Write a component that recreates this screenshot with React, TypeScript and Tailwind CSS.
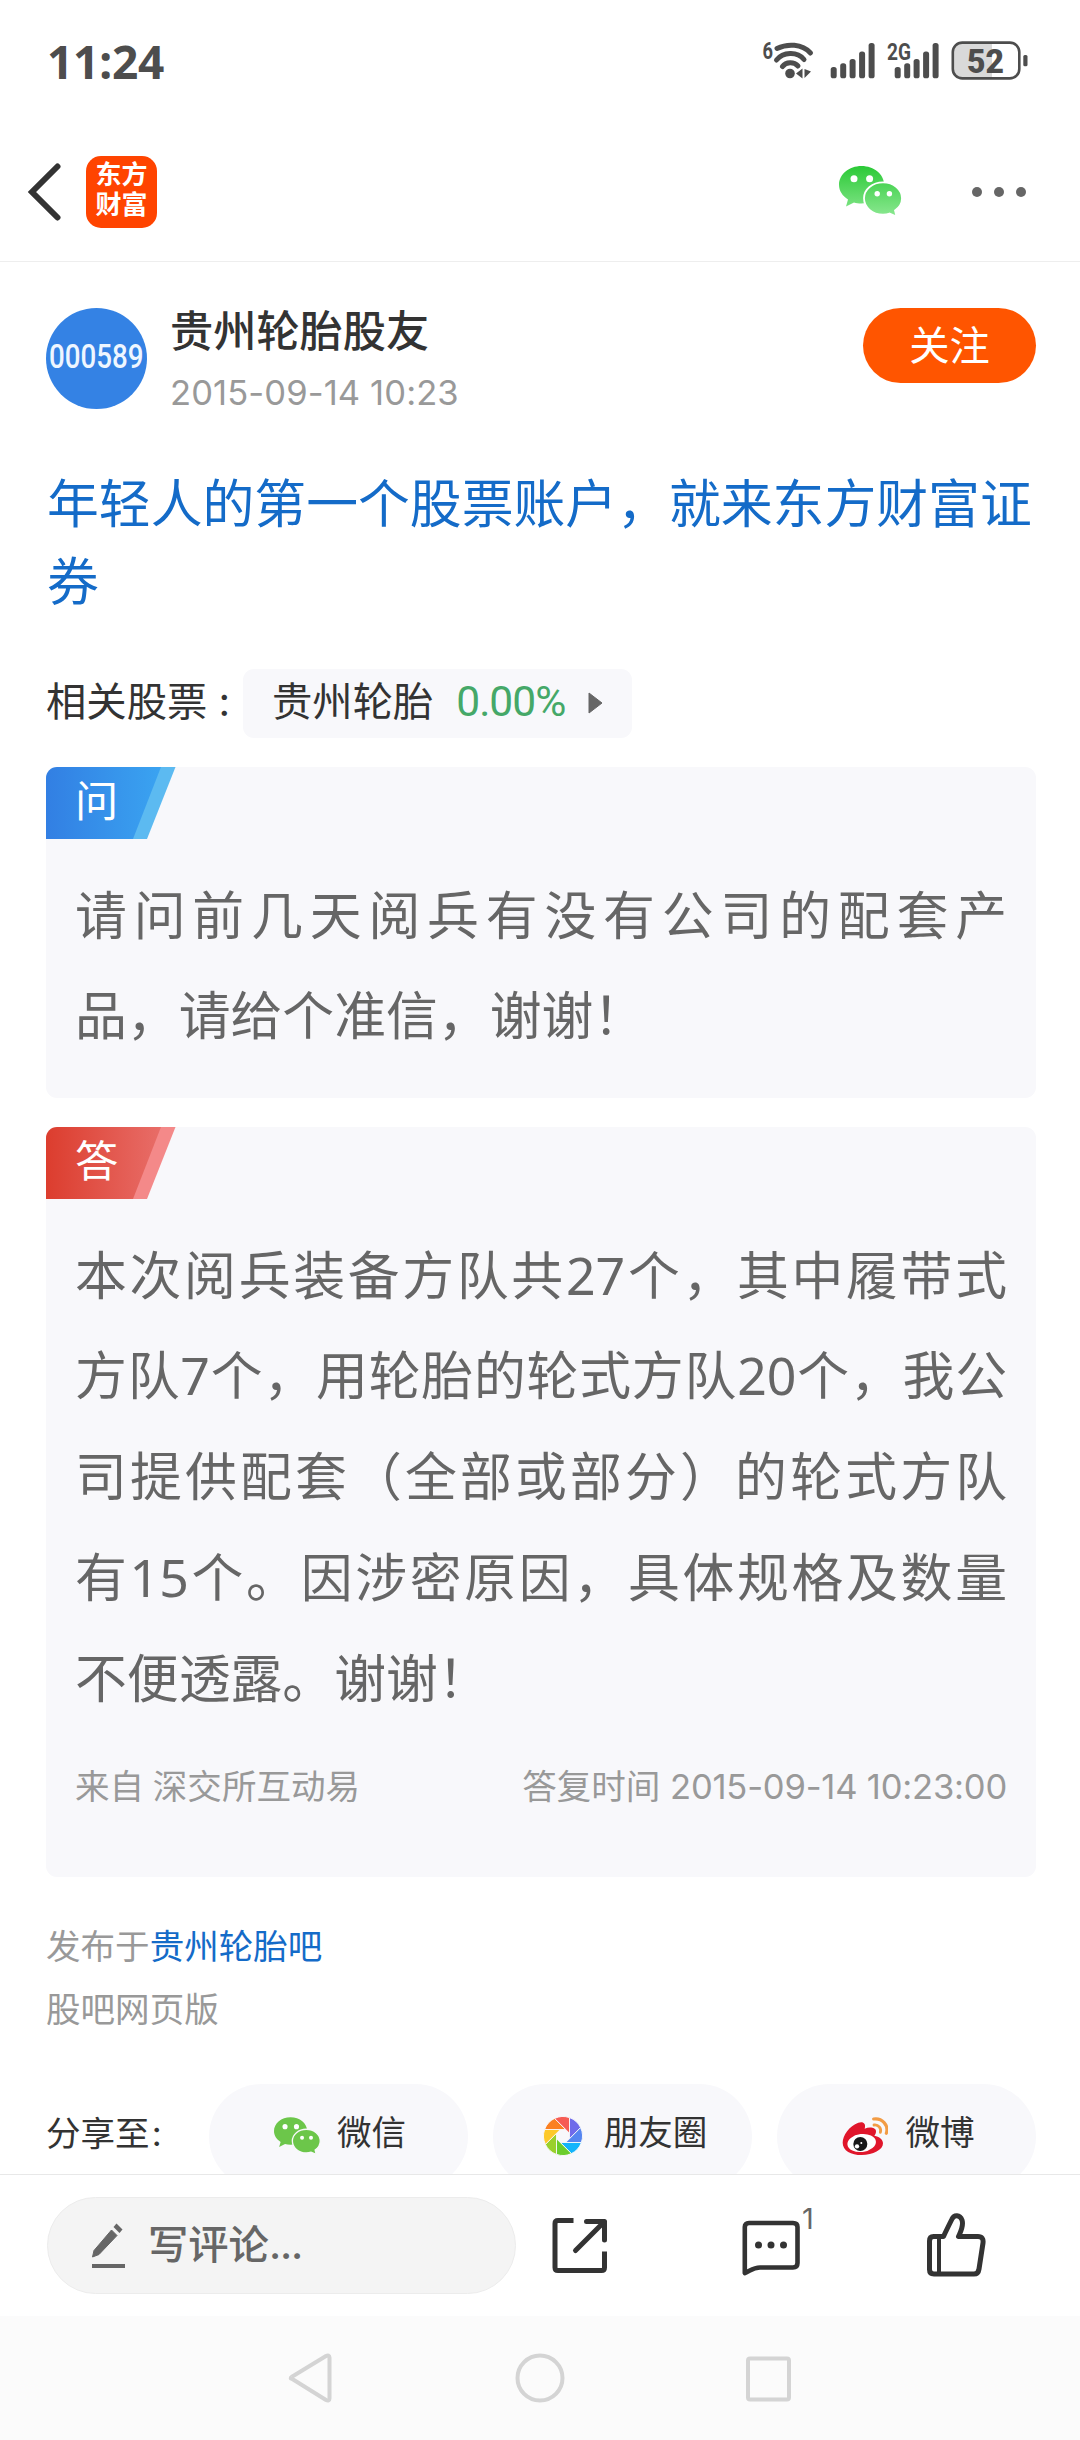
import type { ReactNode } from "react"

const latin = "font-['Inter','Noto_Sans_CJK_SC',sans-serif]"

const blades = ["#6f6aea", "#5585f0", "#14b4fb", "#6bcd2c", "#9ad02c", "#fdc92a", "#fb8022", "#f65c54"]

function StatusIcons() {
  return (
    <svg width="270" height="60" viewBox="760 32 270 60" fill="#4d4d4d" className="font-['Roboto',sans-serif]">
      <text x="762.5" y="59" fontSize="23" fontWeight="700" textLength="10.5" lengthAdjust="spacingAndGlyphs">6</text>
      {/* wifi */}
      <g fill="none" stroke="#4d4d4d" strokeWidth="5" strokeLinecap="round">
        <path d="M777 48.5C787 43.5 802 43.5 810.5 53" />
        <path d="M776.5 60C783 52 797 51 804 59.5" />
        <path d="M782.5 66.5C786 61.5 794 61.5 798 66" />
      </g>
      <circle cx="790" cy="73.5" r="4.8" />
      <path d="M796 73.5L802.5 68.5V78.5ZM804.5 69L811 71.5L804.5 78Z" />
      {/* signal bars */}
      {[0, 64].map((dx) => (
        <g key={dx}>
          <rect x={830.7 + dx} y="67" width="6" height="11.3" rx="2.6" />
          <rect x={840.2 + dx} y="63.3" width="6" height="15" rx="2.6" />
          <rect x={849.6 + dx} y="59" width="6" height="19.3" rx="2.6" />
          <rect x={859.1 + dx} y="51.5" width="6" height="26.8" rx="2.6" />
          <rect x={868.6 + dx} y="43" width="6" height="35.3" rx="2.6" />
        </g>
      ))}
      <text x="887" y="60.3" fontSize="23.5" fontWeight="700" textLength="24" lengthAdjust="spacingAndGlyphs">2G</text>
      {/* battery */}
      <path d="M963 43H992V78H963C956 78 953 74 953 68V53C953 47 956 43 963 43Z" fill="#d9d9d9" />
      <rect x="952.8" y="42.6" width="66.5" height="35.8" rx="9.5" fill="none" stroke="#4d4d4d" strokeWidth="2.6" />
      <rect x="1023.3" y="55" width="4.2" height="11.3" rx="1.5" />
      <text x="967" y="73" fontSize="32.5" fontWeight="900" textLength="37" lengthAdjust="spacingAndGlyphs">52</text>
    </svg>
  )
}

function WechatIcon({ id, width, height, from, to, gap }: { id: string; width: number; height: number; from: string; to: string; gap: string }) {
  return (
    <svg width={width} height={height} viewBox="0 0 64 51">
      <defs>
        <linearGradient id={id} x1="0" y1="0" x2="0" y2="51" gradientUnits="userSpaceOnUse">
          <stop offset="0" stopColor={from} />
          <stop offset="1" stopColor={to} />
        </linearGradient>
      </defs>
      <path d="M22.5 0C35 0 45.2 8.4 45.2 18.8S35 37.5 22.5 37.5C19.5 37.5 17 37.2 15 36.5L7 40.5L9 33.5C3.5 30 0 25 0 18.8C0 8.4 10 0 22.5 0Z" fill={`url(#${id})`} />
      <path d="M44 16.3C54.6 16.3 63 23.5 63 32.3C63 37.3 60.5 41.5 56 44.5L57.5 50.5L50.5 47.5C48.5 48.3 46.5 48.6 44 48.6C33.4 48.6 25 41.3 25 32.3C25 23.5 33.4 16.3 44 16.3Z" fill={`url(#${id})`} stroke={gap} strokeWidth="1.8" />
      <g fill="#fff">
        <circle cx="15" cy="12.8" r="3.5" />
        <circle cx="30.6" cy="12.8" r="3.5" />
        <circle cx="38.2" cy="27.8" r="2.7" />
        <circle cx="50.4" cy="27.8" r="2.7" />
      </g>
    </svg>
  )
}

function MomentsIcon() {
  return (
    <svg width="40" height="40" viewBox="-20 -20 40 40">
      {blades.map((color, i) => (
        <path
          key={color}
          d="M6.5 -18.4A19.5 19.5 0 0 1 17.6 -8.4L6.5 2.7Z"
          transform={`rotate(${i * 45})`}
          fill={color}
          stroke="#f8f8fb"
          strokeWidth="0.9"
        />
      ))}
    </svg>
  )
}

function WeiboIcon() {
  return (
    <svg width="47" height="40" viewBox="0 0 141 120">
      <path d="M5 80C5 58 25 30 52 20C66 15 76 22 71 38C85 32 105 34 105 46C105 52 103 56 100 59C115 62 126 70 126 82C126 102 96 117 62 117C30 117 5 104 5 80Z" fill="#e0162b" />
      <ellipse cx="62" cy="81" rx="43" ry="27" transform="rotate(-7 62 81)" fill="#fff" />
      <circle cx="58" cy="84" r="21" fill="#181818" />
      <circle cx="48" cy="91" r="6.5" fill="#fff" />
      <circle cx="61" cy="81" r="3" fill="#fff" />
      <g fill="none" stroke="#f29c45" strokeLinecap="round">
        <path d="M98 9C123 5 144 28 136 52" strokeWidth="9.5" />
        <path d="M99 27C112 25 122 37 118 49" strokeWidth="8.5" />
      </g>
    </svg>
  )
}

function Tag({ id, label, from, to, edge }: { id: string; label: string; from: string; to: string; edge: string }) {
  return (
    <div className="relative h-[72px] w-[130px]">
      <svg width="130" height="72" className="absolute inset-0">
        <defs>
          <linearGradient id={id}>
            <stop offset="0" stopColor={from} />
            <stop offset="1" stopColor={to} />
          </linearGradient>
        </defs>
        <path d="M100 0H129.5L101 72H80Z" fill={edge} />
        <path d="M0 0H115L87 72H0Z" fill={`url(#${id})`} />
      </svg>
      <span className="relative block w-[101px] text-center text-[43.2px] leading-[68px] text-white">{label}</span>
    </div>
  )
}

function CardText({ children }: { children: ReactNode }) {
  return (
    <p className="mt-[26px] ml-[29px] mr-[29px] text-justify font-['Noto_Sans','Noto_Sans_CJK_SC',sans-serif] text-[51.84px] leading-[100.9px] text-[#666]">
      {children}
    </p>
  )
}

function SharePill({ icon, label, iconClass }: { icon: ReactNode; label: string; iconClass: string }) {
  return (
    <button className="flex h-[105px] w-[259px] items-center justify-center rounded-full bg-[#f8f8fb] pl-[3px]">
      <span className={iconClass}>{icon}</span>
      <span className="mb-[6px] leading-[50px]">{label}</span>
    </button>
  )
}

export default function App() {
  return (
    <div lang="zh-CN" className={`flex h-[2440px] w-[1080px] flex-col overflow-hidden bg-white text-[#333] ${latin}`}>
      {/* Status bar */}
      <div className="flex h-[122px] items-center justify-between pl-[47px] pr-[50px] pt-[2px]">
        <span className="-mt-[3px] font-['Noto_Sans',sans-serif] text-[46px] font-bold leading-[60px] tracking-[-0.2px] text-[#4d4d4d]">11:24</span>
        <StatusIcons />
      </div>

      {/* Header */}
      <header className="flex h-[140px] items-center border-b border-[#eee] pl-[27px] pr-[54px]">
        <svg width="34" height="58" viewBox="0 0 34 58" fill="none" stroke="#333" strokeWidth="6">
          <path d="M30.5 3.5L5 29L30.5 54.5" strokeLinecap="round" />
        </svg>
        <div className="ml-[25px] flex h-[72px] w-[71px] flex-col items-center justify-center rounded-[15px] bg-[#ff4400] pb-[3px] text-[26px] font-bold leading-[30.5px] text-white">
          <span>东方</span>
          <span>财富</span>
        </div>
        <div className="ml-auto flex items-center gap-[69px]">
          <WechatIcon id="wx-head" width={64} height={51} from="#2bc936" to="#8ce892" gap="#fff" />
          <div className="flex gap-[12px]">
            <i className="size-[10px] rounded-full bg-[#666]" />
            <i className="size-[10px] rounded-full bg-[#666]" />
            <i className="size-[10px] rounded-full bg-[#666]" />
          </div>
        </div>
      </header>

      <main className="h-[1912px] shrink-0 overflow-hidden pl-[46px] pr-[44px] pt-[46px]">
        {/* Author */}
        <div className="flex h-[101px]">
          <div className="flex size-[101px] items-center justify-center rounded-full bg-[#3482e4]">
            <span className="-mt-[3px] scale-x-[0.84] font-['Roboto',sans-serif] text-[33px] font-medium leading-[40px] text-[#eef6ff]">000589</span>
          </div>
          <div className="ml-[23px]">
            <div className="text-[43.2px] font-medium leading-[46px]">贵州轮胎股友</div>
            <div className="mt-[15px] text-[34.56px] leading-[48px] tracking-[0.1px] text-[#999]">2015-09-14 10:23</div>
          </div>
          <button className="ml-auto h-[75px] w-[173px] rounded-full bg-[#ff5500] text-[40.3px] leading-[75px] text-white">关注</button>
        </div>

        <h1 className="mt-[57px] pl-px text-[51.84px] leading-[77.76px] text-[#146bc8]">年轻人的第一个股票账户，就来东方财富证券</h1>

        {/* Related stock */}
        <div className="mt-[47px] flex h-[69px] items-center text-[40.32px] leading-[60px]">
          <span className="-mt-[2px] w-[197px] whitespace-nowrap">相关股票 :</span>
          <div className="flex h-[69px] w-[389px] items-center rounded-[11px] bg-[#f8f8fb] pl-[29px]">
            <span className="-mt-[2px]">贵州轮胎</span>
            <span className="-mt-[2px] ml-[23px] w-[109px] font-['Roboto',sans-serif] text-[42.5px] tracking-[-1px] text-[#45a868]">0.00%</span>
            <svg width="15" height="22" viewBox="0 0 15 22" className="ml-[23px]">
              <path d="M1 1L14 11L1 21Z" fill="#666" stroke="#666" strokeLinejoin="round" />
            </svg>
          </div>
        </div>

        {/* Question */}
        <section className="mt-[29px] h-[331px] overflow-hidden rounded-[11px] bg-[#f8f8fb]">
          <Tag id="tag-q" label="问" from="#327fe3" to="#3aa3f1" edge="#5cbaf1" />
          <CardText>请问前几天阅兵有没有公司的配套产品，请给个准信，谢谢！</CardText>
        </section>

        {/* Answer */}
        <section className="mt-[29px] h-[750px] overflow-hidden rounded-[11px] bg-[#f8f8fb]">
          <Tag id="tag-a" label="答" from="#dc3d2e" to="#e86d68" edge="#f48989" />
          <CardText>
            本次阅兵装备方队共27个，其中履带式方队7个，用轮胎的轮式方队20个，我公司提供配套（全部或部分）的轮式方队有15个。因涉密原因，具体规格及数量不便透露。谢谢！
          </CardText>
          <div className="mt-[32px] ml-[29px] mr-[29px] flex justify-between text-[34.56px] leading-[52px] text-[#999]">
            <span className="[word-spacing:-1px]">来自 深交所互动易</span>
            <span>答复时间 <span className="tracking-[-0.2px]">2015-09-14 10:23:00</span></span>
          </div>
        </section>

        <div className="mt-[38px] text-[34.56px] leading-[63.6px] text-[#999]">
          <div>发布于<a className="text-[#146bc8]">贵州轮胎吧</a></div>
          <div>股吧网页版</div>
        </div>

        {/* Share */}
        <div className="mt-[42px] flex items-center text-[34.56px]">
          <span className="mb-[5px] w-[163px] leading-[50px]">分享至<span className="ml-[2px]">:</span></span>
          <div className="flex gap-[25px]">
            <SharePill
              icon={<WechatIcon id="wx-share" width={47} height={38} from="#6cc64a" to="#6cc64a" gap="#f8f8fb" />}
              label="微信"
              iconClass="mr-[16px]"
            />
            <SharePill icon={<MomentsIcon />} label="朋友圈" iconClass="ml-[2px] mr-[21px]" />
            <SharePill icon={<WeiboIcon />} label="微博" iconClass="mr-[17px]" />
          </div>
        </div>
      </main>

      {/* Comment bar */}
      <footer className="flex h-[142px] shrink-0 items-center border-t border-[#e8e8e8] bg-white pl-[47px]">
        <div className="flex h-[97px] w-[469px] items-center rounded-full border border-[#ececec] bg-[#f4f4f4] pl-[43px] text-[#666]">
          <svg width="35" height="47" viewBox="0 0 35 47" fill="#666">
            <path d="M1.5 35L3 28.5L20.5 8L26 13.5L8 32.5Z" stroke="#666" strokeLinejoin="round" />
            <path d="M22.5 5L25.5 1.5L31.5 7.5L28.5 11Z" />
            <rect x="1" y="42" width="33" height="4" />
          </svg>
          <span className="-mt-[2px] ml-[22px] text-[40.3px] font-medium leading-[56px]">写评论<span className="tracking-[-1.2px]">...</span></span>
        </div>
        <svg width="56" height="57" viewBox="0 0 56 57" fill="none" stroke="#333" strokeWidth="5" strokeLinecap="round" strokeLinejoin="round" className="ml-[36px]">
          <path d="M21.5 3.5H6C4 3.5 3 4.5 3 6.5V50.5C3 52.5 4 53.5 6 53.5H49.5C51.5 53.5 52.5 52.5 52.5 50.5V34.5" strokeLinecap="butt" />
          <path d="M34.5 4.5H52.5V23M51.5 5.5L23.5 33.5" />
        </svg>
        <div className="relative ml-[134px] mt-[5px]">
          <svg width="58" height="56" viewBox="0 0 58 56" fill="none" stroke="#333" strokeWidth="4.6" strokeLinejoin="round" className="block">
            <path d="M7 3H51C54 3 55.5 4.5 55.5 7V43C55.5 46 54 47.5 51 47.5H18C11 47.5 8 51 2.8 53V7C2.8 4.5 4 3 7 3Z" />
            <g fill="#333" stroke="none">
              <circle cx="16.5" cy="25" r="3.5" />
              <circle cx="29" cy="25" r="3.5" />
              <circle cx="41.5" cy="25" r="3.5" />
            </g>
          </svg>
          <span className="absolute -top-[16px] left-[60px] text-[29px] leading-[30px] text-[#666]">1</span>
        </div>
        <svg width="59" height="65" viewBox="0 0 59 65" fill="none" stroke="#333" strokeWidth="5" strokeLinejoin="round" className="ml-[127px]">
          <path d="M6.5 23.5H16.5C19 18 22 12 25 6C27 1.5 33 1.5 35 7C37 13 33.5 19 31.5 23.5H51C55 23.5 56.5 26 56 30L52 56C51.5 59.5 50 61 47 61H7C4 61 2.5 59.5 2.5 56.5V28C2.5 25 4 23.5 6.5 23.5Z" />
          <path d="M12 23.5V61" strokeWidth="4" />
        </svg>
      </footer>

      {/* System navigation */}
      <nav className="flex flex-1 items-start bg-[#fbfbfb] pl-[288px] pt-[36px]">
        <svg width="506" height="52" viewBox="0 0 506 52" fill="none" stroke="#d4d4d4" strokeWidth="4" strokeLinejoin="round">
          <path d="M3.5 26.5C2.5 27 2.5 25.5 3.5 25L38 4C40 3 41.5 3.5 41.5 5.5V46.5C41.5 48.5 40 49 38 48Z" />
          <circle cx="252" cy="26" r="22.5" />
          <rect x="460" y="6.5" width="41" height="41" rx="2" />
        </svg>
      </nav>
    </div>
  )
}
